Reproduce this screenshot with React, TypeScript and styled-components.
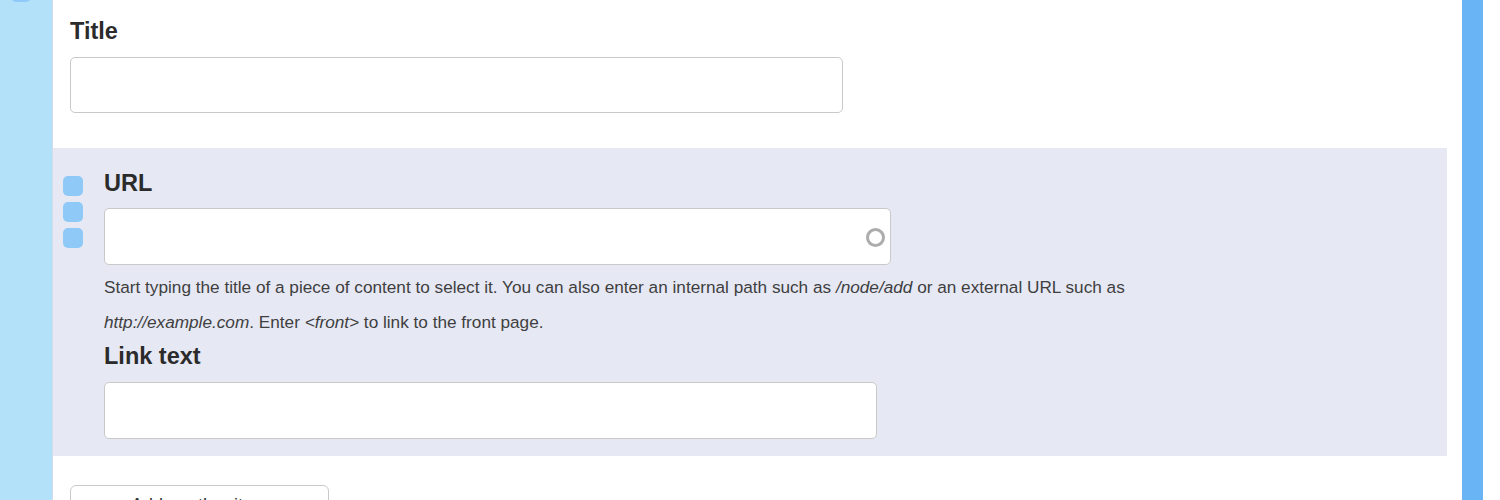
import React from "react";
import styled, { createGlobalStyle } from "styled-components";

const Global = createGlobalStyle`
  html, body { margin: 0; padding: 0; background: #fff; }
  body { font-family: "Liberation Sans", Arial, Helvetica, sans-serif; color: #333; overflow: hidden; }
`;

const Page = styled.div`
  display: flex;
  height: 500px;
  overflow: hidden;
`;

const Rail = styled.div`
  flex: none;
  width: 41px;
  background: #b3e1f9;
  border-right: 1px solid #d4dbe8;
  display: flex;
  flex-direction: column;
  align-items: flex-start;
  padding-left: 11px;
  box-sizing: content-box;
`;

const Main = styled.main`
  flex: none;
  width: 1394px;
  padding: 17px 15px 0 0;
  background: #fff;
  display: flex;
  flex-direction: column;
`;

const Block = styled.div`
  padding-left: 17px;
  display: flex;
  flex-direction: column;
`;

const Label = styled.label<{ $mt?: number }>`
  font-weight: bold;
  font-size: 23.5px;
  line-height: 28px;
  color: #2b2b2b;
  margin-top: ${(p) => p.$mt ?? 0}px;
`;

const InputWrap = styled.div<{ $w: number; $h: number; $mt: number }>`
  position: relative;
  width: ${(p) => p.$w}px;
  height: ${(p) => p.$h}px;
  margin-top: ${(p) => p.$mt}px;
`;

const Input = styled.input`
  width: 100%;
  height: 100%;
  box-sizing: border-box;
  border: 1px solid #c9c9c9;
  border-radius: 5px;
  background: #fff;
  font: inherit;
  padding: 0 12px;
  outline: none;
`;

const Throbber = styled.span`
  position: absolute;
  right: 6px;
  top: 50%;
  width: 19px;
  height: 19px;
  margin-top: -9px;
  border: 3px solid #acacac;
  border-radius: 50%;
  box-sizing: border-box;
`;

const Row = styled.div`
  margin-top: 35px;
  background: #e6e8f4;
  display: flex;
  gap: 21px;
  padding: 21px 0 17px 10px;
`;

const Handles = styled.div`
  display: flex;
  flex-direction: column;
  gap: 6px;
  padding-top: 7px;
`;

const Handle = styled.span<{ $top?: number }>`
  display: block;
  width: 20px;
  height: 20px;
  border-radius: 5px;
  background: #8ec9f7;
  margin-top: ${(p) => p.$top ?? 0}px;
`;

const Content = styled.div`
  display: flex;
  flex-direction: column;
`;

const Description = styled.div`
  margin-top: 5px;
  font-size: 17.2px;
  line-height: 35px;
  color: #3f3f3f;
  width: 1330px;
  em { font-style: italic; }
`;

const Button = styled.button`
  margin: 29px 0 0 17px;
  width: 259px;
  height: 44px;
  border: 1px solid #c9c9c9;
  border-radius: 6px;
  background: #fff;
  font-family: inherit;
  font-size: 18px;
  line-height: 22px;
  color: #333;
  padding: 8px 0 0;
  align-self: flex-start;
  display: flex;
  justify-content: center;
  align-items: flex-start;
`;

const BlueBar = styled.div`
  width: 21px;
  flex: none;
  background: #68b4f5;
`;

const Edge = styled.div`
  flex: 1;
  background: #fff;
`;

export default function App() {
  return (
    <>
      <Global />
      <Page>
        <Rail>
          <Handle $top={-18} />
        </Rail>
        <Main>
          <Block>
            <Label>Title</Label>
            <InputWrap $w={773} $h={56} $mt={12}>
              <Input type="text" />
            </InputWrap>
          </Block>
          <Row>
            <Handles>
              <Handle />
              <Handle />
              <Handle />
            </Handles>
            <Content>
              <Label>URL</Label>
              <InputWrap $w={787} $h={57} $mt={11}>
                <Input type="text" />
                <Throbber />
              </InputWrap>
              <Description>
                Start typing the title of a piece of content to select it. You can also enter an internal path such as <em>/node/add</em> or an external URL such as
                <br />
                <em>http://example.com</em>. Enter <em>&lt;front&gt;</em> to link to the front page.
              </Description>
              <Label $mt={2}>Link text</Label>
              <InputWrap $w={773} $h={57} $mt={12}>
                <Input type="text" />
              </InputWrap>
            </Content>
          </Row>
          <Button type="button">Add another item</Button>
        </Main>
        <BlueBar />
        <Edge />
      </Page>
    </>
  );
}
